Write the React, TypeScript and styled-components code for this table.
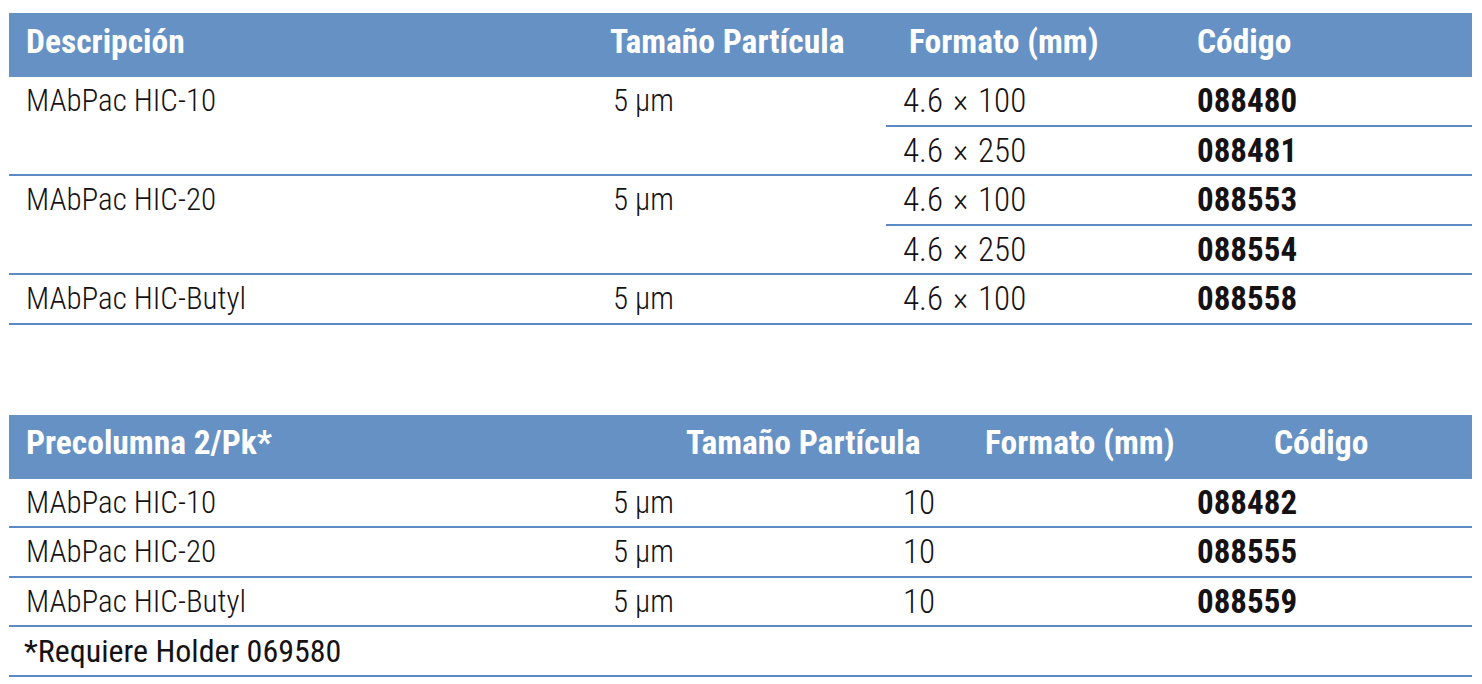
import React from 'react';
import styled, { createGlobalStyle } from 'styled-components';

const BLUE = '#6591c4';
const LINE = '#5b8ac4';

const Global = createGlobalStyle`
  html, body { margin: 0; padding: 0; background: #ffffff; }
  body {
    font-family: "Roboto Condensed", "Liberation Sans Narrow", "Liberation Sans", sans-serif;
    color: #161213;
  }
`;

const Page = styled.div`
  width: 1463px;
  padding: 13px 0 0 9px;
  display: flex;
  flex-direction: column;
  gap: 90px;
`;

const Table = styled.section`
  display: flex;
  flex-direction: column;
`;

const HeaderBar = styled.div<{ $cols: string }>`
  display: grid;
  grid-template-columns: ${(p) => p.$cols};
  height: 64px;
  background: ${BLUE};
  align-items: center;
`;

const HeadCell = styled.div`
  padding: 0 0 8px 17px;
  font-weight: 700;
  font-size: 33.5px;
  color: #ffffff;
  white-space: nowrap;
`;

const Group = styled.div`
  display: grid;
  grid-template-columns: 587px 290px 1fr;
  border-bottom: 2px solid ${LINE};
`;

type Kind = 'text' | 'fmt' | 'code';

const Cell = styled.div<{ $kind?: Kind }>`
  height: 47.5px;
  display: flex;
  align-items: center;
  padding-left: 17px;
  font-size: ${(p) => (p.$kind === 'text' || !p.$kind ? '31px' : '33px')};
  font-weight: ${(p) => (p.$kind === 'code' ? 700 : 300)};
  word-spacing: ${(p) => (p.$kind === 'fmt' ? '2.5px' : '0')};
  white-space: nowrap;
`;

const SubRows = styled.div`
  display: flex;
  flex-direction: column;
`;

const SubRow = styled.div<{ $last: boolean }>`
  display: grid;
  grid-template-columns: 294px 1fr;
  border-bottom: ${(p) => (p.$last ? 'none' : `2px solid ${LINE}`)};
`;

const Note = styled.div`
  height: 48px;
  display: flex;
  align-items: center;
  padding-left: 15px;
  font-size: 32px;
  font-weight: 400;
  border-bottom: 2px solid ${LINE};
  white-space: nowrap;
`;

type Item = { name: string; size: string; variants: { fmt: string; code: string }[] };

const columns: Item[] = [
  {
    name: 'MAbPac HIC-10',
    size: '5 µm',
    variants: [
      { fmt: '4.6 × 100', code: '088480' },
      { fmt: '4.6 × 250', code: '088481' },
    ],
  },
  {
    name: 'MAbPac HIC-20',
    size: '5 µm',
    variants: [
      { fmt: '4.6 × 100', code: '088553' },
      { fmt: '4.6 × 250', code: '088554' },
    ],
  },
  { name: 'MAbPac HIC-Butyl', size: '5 µm', variants: [{ fmt: '4.6 × 100', code: '088558' }] },
];

const guards: Item[] = [
  { name: 'MAbPac HIC-10', size: '5 µm', variants: [{ fmt: '10', code: '088482' }] },
  { name: 'MAbPac HIC-20', size: '5 µm', variants: [{ fmt: '10', code: '088555' }] },
  { name: 'MAbPac HIC-Butyl', size: '5 µm', variants: [{ fmt: '10', code: '088559' }] },
];

const Rows = ({ items }: { items: Item[] }) => (
  <>
    {items.map((it) => (
      <Group key={it.name}>
        <Cell $kind="text">{it.name}</Cell>
        <Cell $kind="text">{it.size}</Cell>
        <SubRows>
          {it.variants.map((v, i) => (
            <SubRow key={v.code} $last={i === it.variants.length - 1}>
              <Cell $kind="fmt">{v.fmt}</Cell>
              <Cell $kind="code">{v.code}</Cell>
            </SubRow>
          ))}
        </SubRows>
      </Group>
    ))}
  </>
);

export default function App() {
  return (
    <>
      <Global />
      <Page>
        <Table>
          <HeaderBar $cols="584px 299px 288px 1fr">
            <HeadCell>Descripción</HeadCell>
            <HeadCell>Tamaño Partícula</HeadCell>
            <HeadCell>Formato (mm)</HeadCell>
            <HeadCell>Código</HeadCell>
          </HeaderBar>
          <Rows items={columns} />
        </Table>
        <Table>
          <HeaderBar $cols="660px 299px 289px 1fr">
            <HeadCell>Precolumna 2/Pk*</HeadCell>
            <HeadCell>Tamaño Partícula</HeadCell>
            <HeadCell>Formato (mm)</HeadCell>
            <HeadCell>Código</HeadCell>
          </HeaderBar>
          <Rows items={guards} />
          <Note>*Requiere Holder 069580</Note>
        </Table>
      </Page>
    </>
  );
}
